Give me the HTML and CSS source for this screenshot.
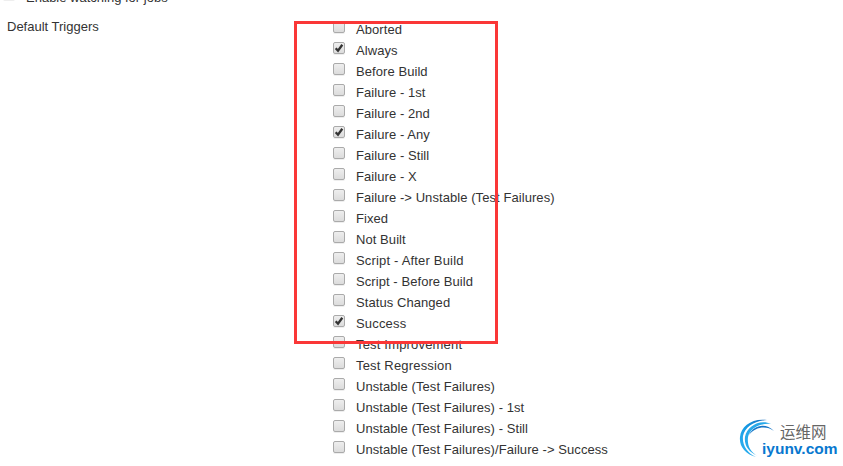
FILE: index.html
```
<!DOCTYPE html>
<html lang="en">
<head>
<meta charset="utf-8">
<title>Default Triggers</title>
<link rel="stylesheet" href="styles.css">
</head>
<body>
<div class="watching"><span class="box"></span><span class="watching-text">Enable watching for jobs</span></div>
<main class="setting">
  <div class="setting-name">Default Triggers</div>
  <div class="triggers">
    <label class="row"><span class="box"></span><span>Aborted</span></label>
    <label class="row"><span class="box"><svg class="tick" viewBox="0 0 12 12"><path d="M2.7 6.2 5 8.7 9.3 2.8"/></svg></span><span>Always</span></label>
    <label class="row"><span class="box"></span><span>Before Build</span></label>
    <label class="row"><span class="box"></span><span>Failure - 1st</span></label>
    <label class="row"><span class="box"></span><span>Failure - 2nd</span></label>
    <label class="row"><span class="box"><svg class="tick" viewBox="0 0 12 12"><path d="M2.7 6.2 5 8.7 9.3 2.8"/></svg></span><span>Failure - Any</span></label>
    <label class="row"><span class="box"></span><span>Failure - Still</span></label>
    <label class="row"><span class="box"></span><span>Failure - X</span></label>
    <label class="row"><span class="box"></span><span>Failure -&gt; Unstable (Test Failures)</span></label>
    <label class="row"><span class="box"></span><span>Fixed</span></label>
    <label class="row"><span class="box"></span><span>Not Built</span></label>
    <label class="row wide"><span class="box"></span><span>Script - After Build</span></label>
    <label class="row"><span class="box"></span><span>Script - Before Build</span></label>
    <label class="row"><span class="box"></span><span>Status Changed</span></label>
    <label class="row wide"><span class="box"><svg class="tick" viewBox="0 0 12 12"><path d="M2.7 6.2 5 8.7 9.3 2.8"/></svg></span><span>Success</span></label>
    <label class="row wide"><span class="box"></span><span>Test Improvement</span></label>
    <label class="row wide"><span class="box"></span><span>Test Regression</span></label>
    <label class="row"><span class="box"></span><span>Unstable (Test Failures)</span></label>
    <label class="row"><span class="box"></span><span>Unstable (Test Failures) - 1st</span></label>
    <label class="row"><span class="box"></span><span>Unstable (Test Failures) - Still</span></label>
    <label class="row"><span class="box"></span><span>Unstable (Test Failures)/Failure -&gt; Success</span></label>
  </div>
</main>
<div class="highlight"></div>
<div class="brand">
  <svg class="swirl" viewBox="0 0 40 42">
    <defs><linearGradient id="g" x1="0" y1="1" x2="1" y2="0"><stop offset="0" stop-color="#35b6f2"/><stop offset=".5" stop-color="#159be5"/><stop offset="1" stop-color="#1769b8"/></linearGradient></defs>
    <path fill="url(#g)" d="M17 39C6 36 0 28 1 19 2 8 13 0 28 2 15 3 6 9 4 18 3 27 8 35 17 39Z"/>
    <path fill="#27a9ea" d="M19 38C9 34 5 27 6 19 8 8 21 1 32 6 20 5 11 10 9 19 8 27 11 34 19 38Z"/>
    <path fill="#1676c7" d="M10 17C14 7 27 4 35 13 27 7 16 9 10 17Z"/>
  </svg>
  <span class="brand-cn">运维网</span>
  <span class="brand-en">iyunv.com</span>
</div>
</body>
</html>
```

FILE: styles.css
```
body {
  margin: 0;
  height: 466px;
  overflow: hidden;
  position: relative;
  background: #fff;
  color: #333;
  font: 13px/21px "Liberation Sans", Arial, sans-serif;
}
.watching {
  display: flex;
  height: 19px;
  margin-top: -14px;
  padding-left: 3px;
  align-items: flex-start;
}
.watching .box { margin-top: 2px; }
.watching-text { line-height: 23px; letter-spacing: 0; }
.setting {
  display: grid;
  grid-template-columns: 326px 1fr;
  padding: 14px 0 0 7px;
}
.setting-name { margin-top: -3px; }
.row {
  display: flex;
  height: 21px;
  letter-spacing: .07px;
  white-space: nowrap;
}
.wide { letter-spacing: .18px; }
.box {
  box-sizing: border-box;
  flex: none;
  width: 12px;
  height: 12px;
  margin: 2px 11px 0 0;
  border: 1px solid #aaa;
  border-radius: 2px;
  background: linear-gradient(#eee, #dcdcdc);
  box-shadow: 0 1px 0 #eee;
}
.tick {
  display: block;
  width: 12px;
  height: 12px;
  margin: -1px;
  fill: none;
  stroke: #333;
  stroke-width: 2.3;
}
.highlight {
  position: absolute;
  left: 294px;
  top: 21px;
  box-sizing: border-box;
  width: 204px;
  height: 323px;
  border: 3px solid #fa3737;
}
.brand {
  position: absolute;
  left: 739px;
  top: 418px;
  width: 100px;
  height: 42px;
}
.swirl { position: absolute; left: 0; top: 0; width: 40px; height: 42px; }
.brand-cn {
  position: absolute;
  left: 41px;
  top: 2px;
  color: #666;
  font: 15.5px/22px "Noto Sans CJK SC", sans-serif;
  white-space: nowrap;
}
.brand-en {
  position: absolute;
  left: 23px;
  top: 21px;
  color: #0878cf;
  font: bold 15.5px/20px "Liberation Sans", sans-serif;
  letter-spacing: 0;
}
```
